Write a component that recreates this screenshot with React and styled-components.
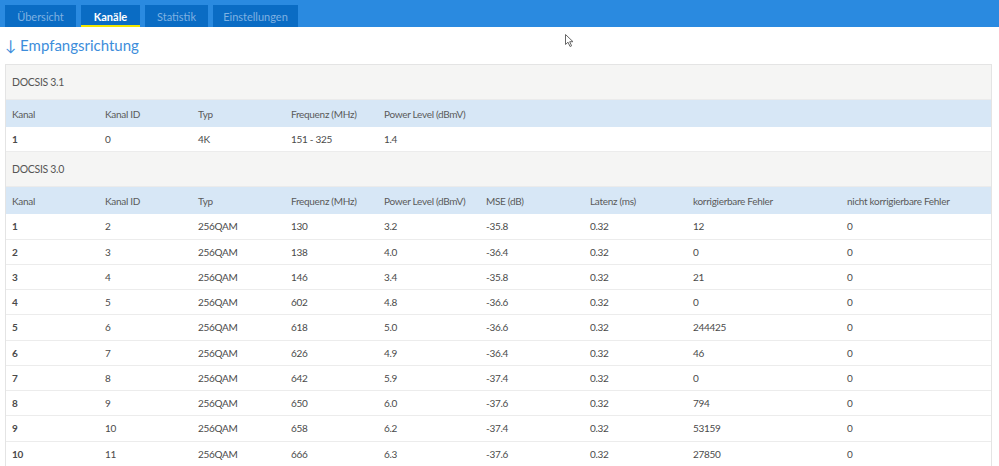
import React from "react";
import styled, { createGlobalStyle } from "styled-components";

const GlobalStyle = createGlobalStyle`
  html, body {
    margin: 0;
    padding: 0;
    background: #fff;
    font-family: Lato, "Open Sans", sans-serif;
    overflow: hidden;
  }
`;

const Page = styled.div`
  position: relative;
  width: 999px;
  height: 466px;
  overflow: hidden;
`;

const TopBar = styled.div`
  display: flex;
  align-items: flex-end;
  gap: 5px;
  height: 27px;
  padding-left: 5px;
  background-color: #2a8ae0;
  box-sizing: border-box;
`;

const Tab = styled.div`
  height: 22px;
  width: ${(p) => p.$w}px;
  background-color: #0a6cc4;
  color: ${(p) => (p.$active ? "#ffffff" : "#7fb1e2")};
  font-size: 11px;
  font-weight: ${(p) => (p.$active ? 700 : 400)};
  display: flex;
  align-items: center;
  justify-content: center;
  box-sizing: border-box;
  border-bottom: 2px solid ${(p) => (p.$active ? "#f2e600" : "transparent")};
  padding-top: 2px;
`;

const Title = styled.h2`
  margin: 0;
  padding: 9px 0 0 5px;
  height: 37px;
  box-sizing: border-box;
  font-size: 15px;
  font-weight: 400;
  color: #3d8ddb;
`;

const Table = styled.div`
  margin: 0 7px 0 5px;
  border: 1px solid #e4e4e4;
  border-bottom: none;
  font-size: 10px;
  letter-spacing: -0.3px;
`;

const Section = styled.div`
  height: 35px;
  display: flex;
  align-items: center;
  padding-left: 6px;
  background-color: #f5f5f4;
  color: #555;
  font-size: 10.5px;
  border-bottom: 1px solid #ebebeb;
  box-sizing: border-box;
`;

const Row = styled.div`
  display: grid;
  grid-template-columns: 93px 93px 93px 93px 102px 104px 103px 154px 1fr;
  align-items: center;
  height: ${(p) => (p.$head ? "27px" : "25.25px")};
  background-color: ${(p) => (p.$head ? "#d7e7f6" : "#ffffff")};
  border-bottom: ${(p) => (p.$head ? "none" : "1px solid #ececec")};
  box-sizing: border-box;
  color: ${(p) => (p.$head ? "#5a5a5a" : "#4a4a4a")};
`;

const Cell = styled.div`
  padding-left: 6px;
  white-space: nowrap;
  font-weight: ${(p) => (p.$bold ? 700 : 400)};
`;

const Cursor = styled.svg`
  position: absolute;
  left: 565px;
  top: 34px;
`;

const heads31 = ["Kanal", "Kanal ID", "Typ", "Frequenz (MHz)", "Power Level (dBmV)"];
const heads30 = [
  ...heads31,
  "MSE (dB)",
  "Latenz (ms)",
  "korrigierbare Fehler",
  "nicht korrigierbare Fehler",
];

const rows30 = [
  ["1", "2", "256QAM", "130", "3.2", "-35.8", "0.32", "12", "0"],
  ["2", "3", "256QAM", "138", "4.0", "-36.4", "0.32", "0", "0"],
  ["3", "4", "256QAM", "146", "3.4", "-35.8", "0.32", "21", "0"],
  ["4", "5", "256QAM", "602", "4.8", "-36.6", "0.32", "0", "0"],
  ["5", "6", "256QAM", "618", "5.0", "-36.6", "0.32", "244425", "0"],
  ["6", "7", "256QAM", "626", "4.9", "-36.4", "0.32", "46", "0"],
  ["7", "8", "256QAM", "642", "5.9", "-37.4", "0.32", "0", "0"],
  ["8", "9", "256QAM", "650", "6.0", "-37.6", "0.32", "794", "0"],
  ["9", "10", "256QAM", "658", "6.2", "-37.4", "0.32", "53159", "0"],
  ["10", "11", "256QAM", "666", "6.3", "-37.6", "0.32", "27850", "0"],
];

const DataRow = ({ cells }) => (
  <Row>
    {cells.map((c, i) => (
      <Cell key={i} $bold={i === 0}>
        {c}
      </Cell>
    ))}
  </Row>
);

const HeadRow = ({ cells }) => (
  <Row $head>
    {cells.map((c, i) => (
      <Cell key={i}>{c}</Cell>
    ))}
  </Row>
);

export default function App() {
  return (
    <Page>
      <GlobalStyle />
      <TopBar>
        <Tab $w={71}>Übersicht</Tab>
        <Tab $w={59} $active>Kanäle</Tab>
        <Tab $w={63}>Statistik</Tab>
        <Tab $w={85}>Einstellungen</Tab>
      </TopBar>
      <Title>↓ Empfangsrichtung</Title>
      <Table>
        <Section>DOCSIS 3.1</Section>
        <HeadRow cells={heads31} />
        <DataRow cells={["1", "0", "4K", "151 - 325", "1.4"]} />
        <Section>DOCSIS 3.0</Section>
        <HeadRow cells={heads30} />
        {rows30.map((r) => (
          <DataRow key={r[0]} cells={r} />
        ))}
      </Table>
      <Cursor width="10" height="14" viewBox="0 0 10 14">
        <path
          d="M0.5 0.5 L0.5 10.5 L3 8.2 L5 12.5 L6.6 11.8 L4.7 7.7 L8 7.7 Z"
          fill="#fff"
          stroke="#666"
          strokeWidth="1"
        />
      </Cursor>
    </Page>
  );
}
